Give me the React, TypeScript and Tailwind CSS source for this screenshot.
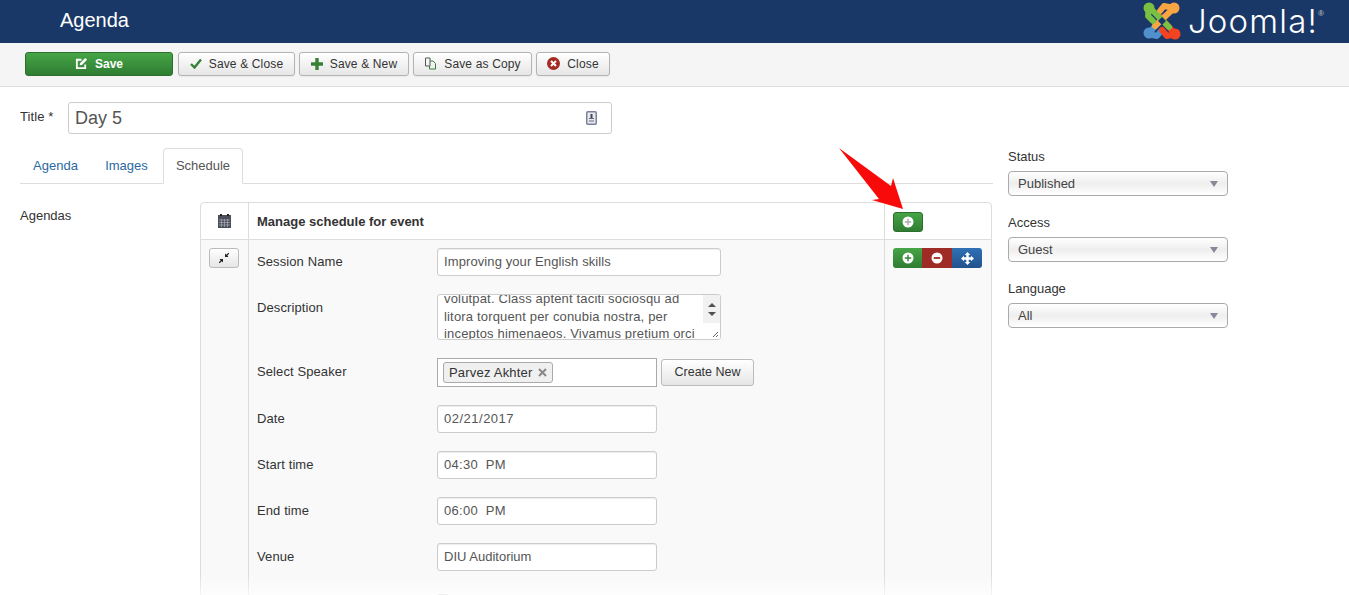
import type { ReactNode } from 'react';

const inputClass =
  'h-[28px] rounded-[3px] border border-[#ccc] bg-white px-[6px] text-[13px] leading-[26px] text-[#555] shadow-[inset_0_1px_1px_rgba(0,0,0,0.075)]';

function JoomlaLogo() {
  return (
    <div className="flex items-start">
      <svg width="38" height="38" viewBox="0 0 38 38" fill="none" strokeWidth="6" strokeLinecap="round" strokeLinejoin="round">
        <path d="M5 32 L21 15 M5 32 L14 34 L18 29" stroke="#5091cd" />
        <circle cx="6" cy="31" r="5.5" fill="#5091cd" />
        <path d="M32 32 L17 15 M32 32 L24 34 L19 28" stroke="#f44321" />
        <circle cx="32" cy="32" r="5.5" fill="#f44321" />
        <path d="M31 6 L12 24 M31 6 L21 4 L17 9" stroke="#f9a541" />
        <circle cx="31" cy="6" r="5.5" fill="#f9a541" />
        <path d="M6 5 L26 25 M6 5 L5 14 L10 19" stroke="#7ac143" />
        <circle cx="6" cy="6" r="5.5" fill="#7ac143" />
        <path d="M19 15 L23 19 L19 23 L15 19 Z" fill="#1a3867" />
      </svg>
      <span className="ml-[7px] mt-[-1px] font-['Inter',sans-serif] text-[33px] font-light leading-[40px] tracking-[1.2px] text-white">Joomla!</span>
      <span className="mt-[8px] text-[8px] leading-none text-[#ccc]">®</span>
    </div>
  );
}

function ToolButton({ width, icon, children }: { width: string; icon: ReactNode; children: ReactNode }) {
  return (
    <button className={`${width} flex h-[24px] items-center justify-center gap-[7px] rounded-[3px] border border-[#b3b3b3] bg-gradient-to-b from-white to-[#e6e6e6] text-[12px] tracking-[0.15px] text-[#333] shadow-[0_1px_2px_rgba(0,0,0,0.05)]`}>
      {icon}
      {children}
    </button>
  );
}

function FieldRow({ label, className, children }: { label: string; className: string; children: ReactNode }) {
  return (
    <div className={`flex ${className}`}>
      <div className="w-[180px] pt-[5px] text-[13px] leading-[18px] tracking-[0.1px] text-[#333]">{label}</div>
      {children}
    </div>
  );
}

function SideSelect({ label, value }: { label: string; value: string }) {
  return (
    <div className="mb-[18px]">
      <div className="mb-[5px] text-[13px] leading-[18px] text-[#333]">{label}</div>
      <div className="flex h-[25px] w-[220px] items-center justify-between rounded-[4px] border border-[#aaa] bg-gradient-to-b from-white via-[#eee] to-white pl-[9px] pr-[9px] pt-[1px] text-[13px] text-[#444]">
        <span>{value}</span>
        <span className="h-0 w-0 border-x-[4px] border-t-[6px] border-x-transparent border-t-[#889]" />
      </div>
    </div>
  );
}

function PlusIcon({ muted }: { muted?: boolean }) {
  const color = muted ? '#aaa' : '#378137';
  return (
    <svg width="12" height="12" viewBox="0 0 12 12">
      <circle cx="6" cy="6" r="5.5" fill="#fff" />
      <path d="M6 2.8V9.2M2.8 6H9.2" stroke={color} strokeWidth="1.4" />
    </svg>
  );
}

export default function App() {
  return (
    <div className="relative h-[595px] w-[1349px] overflow-hidden bg-white font-['Liberation_Sans',Arial,sans-serif]">
      <header className="flex h-[43px] items-start justify-between bg-[#1a3867] pl-[60px] pr-[25px] pt-[2px]">
        <h1 className="text-[20px] leading-[36px] text-white">Agenda</h1>
        <JoomlaLogo />
      </header>

      <div className="flex h-[44px] items-center gap-[4px] border-b border-[#ddd] bg-[#f5f5f5] pb-[2px] pl-[25px]">
        <button className="mr-[1px] flex h-[24px] w-[148px] items-center justify-center gap-[7px] rounded-[3px] border border-[#2c6e2c] bg-gradient-to-b from-[#46a546] to-[#2f7d32] text-[12px] font-bold text-white">
          <svg width="13" height="13" viewBox="0 0 14 14" fill="none">
            <path d="M11 8V12H2V3H7" stroke="#fff" strokeWidth="2" />
            <path d="M5 9L5.5 6.5L11 1L13 3L7.5 8.5Z" fill="#fff" />
          </svg>
          Save
        </button>
        <ToolButton
          width="w-[117px]"
          icon={
            <svg width="12" height="11" viewBox="0 0 12 11" fill="none">
              <path d="M1 6L4.5 9.5L11 1.5" stroke="#378137" strokeWidth="2.4" />
            </svg>
          }
        >
          Save &amp; Close
        </ToolButton>
        <ToolButton
          width="w-[110px]"
          icon={
            <svg width="12" height="12" viewBox="0 0 12 12">
              <path d="M6 0V12M0 6H12" stroke="#378137" strokeWidth="3.4" />
            </svg>
          }
        >
          Save &amp; New
        </ToolButton>
        <ToolButton
          width="w-[119px]"
          icon={
            <svg width="13" height="13" viewBox="0 0 13 13" fill="none">
              <path d="M1.5 1H6V9H1.5Z" stroke="#555" />
              <path d="M6 4H9L11.5 6.5V12H5.5V9" stroke="#378137" />
            </svg>
          }
        >
          Save as Copy
        </ToolButton>
        <ToolButton
          width="w-[74px]"
          icon={
            <svg width="13" height="13" viewBox="0 0 13 13">
              <circle cx="6.5" cy="6.5" r="6.5" fill="#a52a22" />
              <path d="M4 4L9 9M9 4L4 9" stroke="#fff" strokeWidth="2" />
            </svg>
          }
        >
          Close
        </ToolButton>
      </div>

      <div className="flex items-start pl-[20px] pt-[15px]">
        <div className="w-[973px]">
          <div className="flex">
            <div className="w-[48px] pt-[6px] text-[13px] leading-[18px] tracking-[0.1px] text-[#333]">Title *</div>
            <div className="flex h-[32px] w-[544px] items-center justify-between rounded-[3px] border border-[#ccc] pl-[6px] pr-[14px] text-[18px] text-[#555]">
              <span>Day 5</span>
              <svg width="11" height="14" viewBox="0 0 11 14">
                <rect x="0.75" y="0.75" width="9.5" height="12.5" rx="1" fill="#e8e8ee" stroke="#7a8299" strokeWidth="1.5" />
                <path d="M5.5 3V7" stroke="#445" strokeWidth="2" />
                <path d="M3 7.5H8" stroke="#667" strokeWidth="1" />
                <path d="M3 10H8" stroke="#aab" strokeWidth="2" />
              </svg>
            </div>
          </div>

          <div className="mt-[14px] flex h-[36px] items-end border-b border-[#ddd] text-[13px]">
            <span className="flex h-[35px] w-[71px] items-center justify-center text-[#2a69a0]">Agenda</span>
            <span className="flex h-[35px] w-[72px] items-center justify-center pr-[1px] text-[#2a69a0]">Images</span>
            <span className="-mb-px flex h-[36px] w-[80px] items-center justify-center rounded-t-[4px] border border-b-white border-[#ddd] bg-white text-[#555]">Schedule</span>
          </div>

          <div className="mt-[18px] flex">
            <div className="w-[180px] pt-[5px] text-[13px] leading-[18px] text-[#333]">Agendas</div>
            <div className="h-[420px] w-[792px] overflow-hidden rounded-t-[4px] border border-[#ddd]">
              <div className="flex h-[37px] border-b border-[#ddd]">
                <div className="flex w-[48px] items-center justify-center border-r border-[#ddd]">
                  <svg width="13" height="14" viewBox="0 0 13 14">
                    <rect x="0" y="1" width="13" height="13" fill="#4a4f5a" />
                    <path d="M3 0V2M10 0V2" stroke="#222" strokeWidth="2" />
                    <path d="M1 6H12M1 8.5H12M1 11H12M3.5 5V13M6.5 5V13M9.5 5V13" stroke="#aab" strokeWidth="0.7" />
                  </svg>
                </div>
                <div className="flex w-[636px] items-center border-r border-[#ddd] pl-[8px] pt-[1px] text-[13px] font-bold text-[#333]">Manage schedule for event</div>
                <div className="pl-[8px] pt-[9px]">
                  <button className="flex h-[20px] w-[30px] items-center justify-center rounded-[3px] border border-[#2c6e2c] bg-gradient-to-b from-[#46a546] to-[#2f7d32]">
                    <PlusIcon muted />
                  </button>
                </div>
              </div>

              <div className="flex h-[400px] bg-[#f9f9f9]">
                <div className="w-[48px] border-r border-[#ddd] pl-[8px] pt-[8px]">
                  <button className="flex h-[20px] w-[30px] items-center justify-center rounded-[3px] border border-[#bbb] bg-gradient-to-b from-white to-[#e6e6e6]">
                    <svg width="12" height="12" viewBox="0 0 12 12" fill="#222">
                      <path d="M7 5V1.5L8.2 2.7L10.5 0.8L11.2 1.5L9.3 3.8L10.5 5Z" />
                      <path d="M5 7V10.5L3.8 9.3L1.5 11.2L0.8 10.5L2.7 8.2L1.5 7Z" />
                    </svg>
                  </button>
                </div>
                <div className="w-[636px] border-r border-[#ddd] pl-[8px] pt-[8px]">
                  <FieldRow label="Session Name" className="mb-[18px]">
                    <div className={`${inputClass} w-[284px] tracking-[0.1px]`}>Improving your English skills</div>
                  </FieldRow>
                  <FieldRow label="Description" className="mb-[18px]">
                    <div className="relative h-[46px] w-[284px] overflow-hidden rounded-[3px] border border-[#ccc] bg-white">
                      <div className="-mt-[5px] pl-[6px] text-[13px] leading-[17.5px] tracking-[0.17px] text-[#555]">
                        volutpat. Class aptent taciti sociosqu ad
                        <br />
                        litora torquent per conubia nostra, per
                        <br />
                        inceptos himenaeos. Vivamus pretium orci
                      </div>
                      <div className="absolute right-0 top-0 flex h-[28px] w-[17px] flex-col items-center justify-center gap-[5px] bg-[#f1f1f1]">
                        <span className="h-0 w-0 border-x-[4px] border-b-[4px] border-x-transparent border-b-[#505050]" />
                        <span className="h-0 w-0 border-x-[4px] border-t-[4px] border-x-transparent border-t-[#505050]" />
                      </div>
                      <svg className="absolute bottom-0 right-0" width="17" height="16" viewBox="0 0 17 16">
                        <rect width="17" height="16" fill="#fff" />
                        <path d="M15 9L10 14M15 12L13 14" stroke="#666" />
                      </svg>
                    </div>
                  </FieldRow>
                  <FieldRow label="Select Speaker" className="mb-[18px]">
                    <div className="flex h-[29px] w-[220px] items-center border border-[#aaa] bg-white pl-[5px]">
                      <span className="flex h-[21px] items-center gap-[5px] rounded-[3px] border border-[#aaa] bg-[#f0f0f0] px-[5px] text-[13px] tracking-[0.2px] text-[#333]">
                        Parvez Akhter
                        <svg width="9" height="9" viewBox="0 0 9 9">
                          <path d="M1 1L8 8M8 1L1 8" stroke="#888" strokeWidth="2" />
                        </svg>
                      </span>
                    </div>
                    <button className="ml-[4px] mt-[1px] h-[27px] w-[93px] rounded-[3px] border border-[#bbb] bg-gradient-to-b from-white to-[#e6e6e6] text-[12.5px] text-[#333]">Create New</button>
                  </FieldRow>
                  <FieldRow label="Date" className="mb-[18px]">
                    <div className={`${inputClass} w-[220px] tracking-[0.5px]`}>02/21/2017</div>
                  </FieldRow>
                  <FieldRow label="Start time" className="mb-[18px]">
                    <div className={`${inputClass} w-[220px] whitespace-pre tracking-[0.3px]`}>04:30  PM</div>
                  </FieldRow>
                  <FieldRow label="End time" className="mb-[18px]">
                    <div className={`${inputClass} w-[220px] whitespace-pre tracking-[0.3px]`}>06:00  PM</div>
                  </FieldRow>
                  <FieldRow label="Venue" className="mb-[23px]">
                    <div className={`${inputClass} w-[220px]`}>DIU Auditorium</div>
                  </FieldRow>
                  <div className="ml-[180px] h-[14px] w-[12px] rounded-[2px] border border-[#ccc] bg-white" />
                </div>
                <div className="pl-[8px] pt-[8px]">
                  <div className="flex h-[20px] w-[89px] overflow-hidden rounded-[3px]">
                    <span className="flex w-[29px] items-center justify-center bg-gradient-to-b from-[#46a546] to-[#2f7d32]"><PlusIcon /></span>
                    <span className="flex w-[30px] items-center justify-center bg-[#9e2b25]">
                      <svg width="12" height="12" viewBox="0 0 12 12">
                        <circle cx="6" cy="6" r="5.5" fill="#fff" />
                        <path d="M2.8 6H9.2" stroke="#9e2b25" strokeWidth="1.8" />
                      </svg>
                    </span>
                    <span className="flex w-[30px] items-center justify-center bg-gradient-to-b from-[#2f71b5] to-[#22528c]">
                      <svg width="13" height="13" viewBox="0 0 13 13" fill="#fff">
                        <path d="M6.5 0L9.3 3H7.7V5.3H10V3.7L13 6.5L10 9.3V7.7H7.7V10H9.3L6.5 13L3.7 10H5.3V7.7H3V9.3L0 6.5L3 3.7V5.3H5.3V3H3.7Z" />
                      </svg>
                    </span>
                  </div>
                </div>
              </div>
            </div>
          </div>
        </div>

        <aside className="ml-[15px] pt-[46px]">
          <SideSelect label="Status" value="Published" />
          <SideSelect label="Access" value="Guest" />
          <SideSelect label="Language" value="All" />
        </aside>
      </div>

      {/* red pointer arrow drawn over the screenshot */}
      <svg className="absolute left-[835px] top-[145px]" width="75" height="70" viewBox="0 0 75 70">
        <path d="M4 3L56 41L58 33L68 64L37 55L44 54Z" fill="#f80a0a" />
      </svg>
      <div className="pointer-events-none absolute bottom-0 left-0 h-[20px] w-full bg-gradient-to-b from-transparent to-white/70" />
    </div>
  );
}
